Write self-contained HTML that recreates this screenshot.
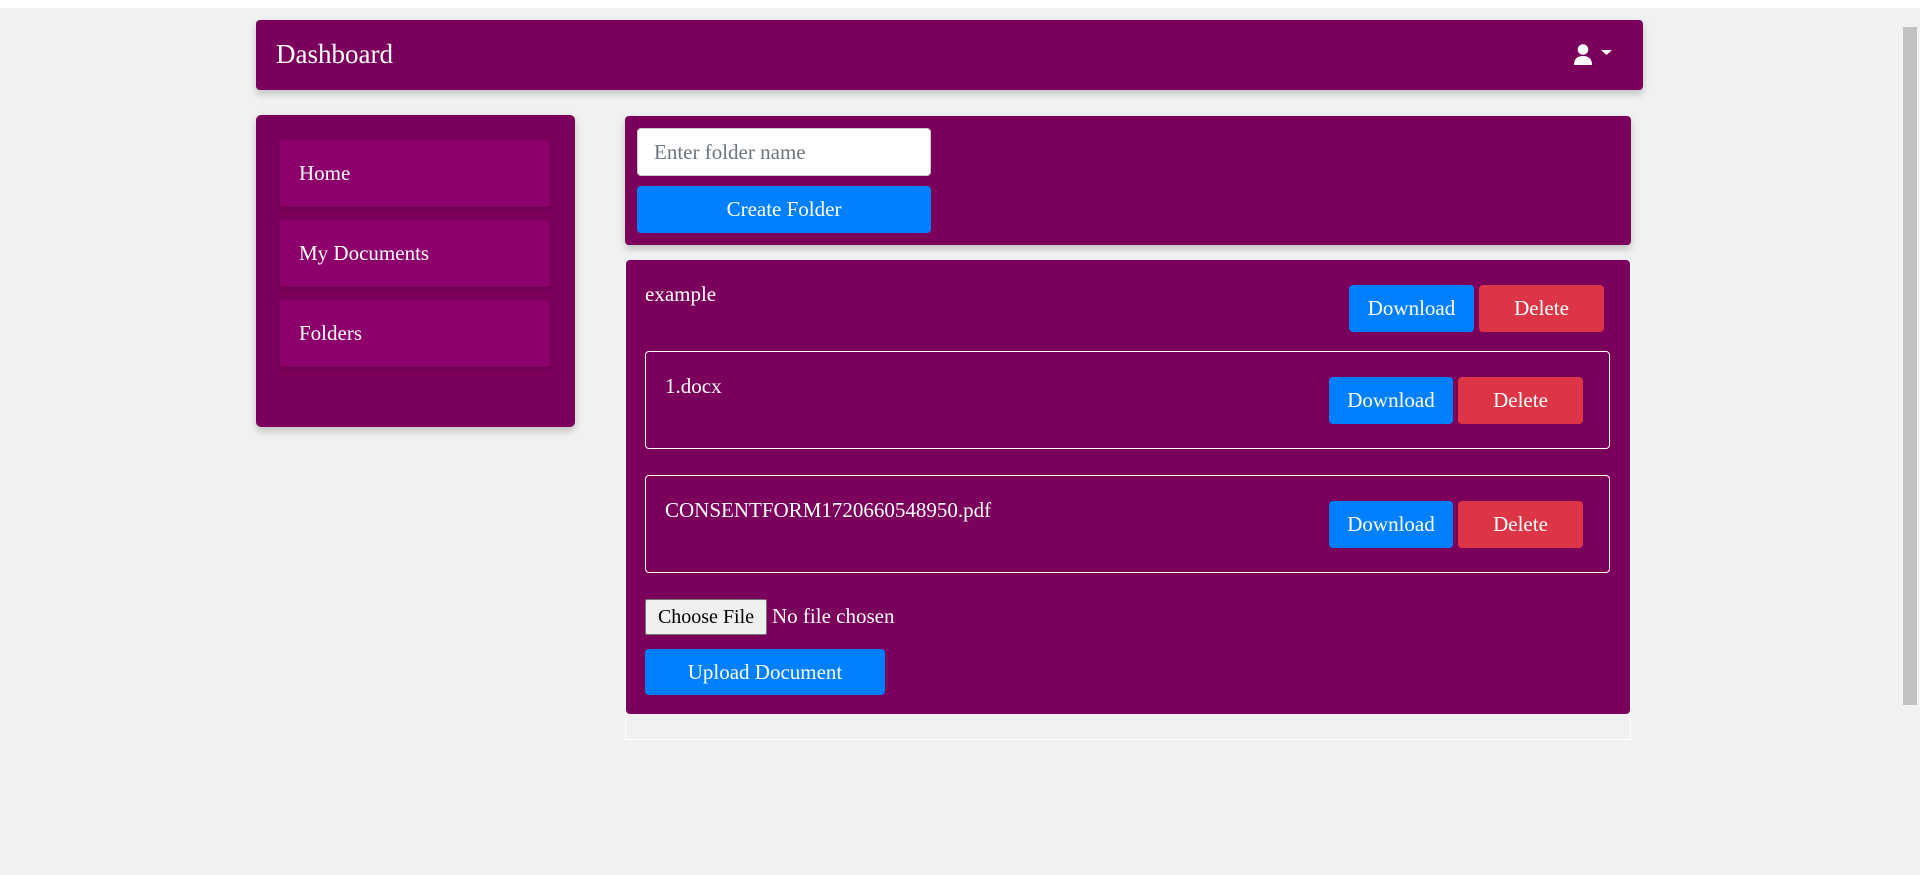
<!DOCTYPE html>
<html><head><meta charset="utf-8"><style>
*{box-sizing:border-box;margin:0;padding:0}
body{width:1920px;height:875px;background:#f1f1f1;font-family:"Liberation Serif",serif;color:#fff;position:relative;overflow:hidden}
.abs{position:absolute}
.topw{left:0;top:0;width:1920px;height:8px;background:#fff}
.nav{left:256px;top:20px;width:1387px;height:70px;background:#7b005c;border-radius:4px;box-shadow:0 4px 8px rgba(0,0,0,.2)}
.nav span{position:absolute;left:20px;top:19px;font-size:27px}
.side{left:256px;top:115px;width:319px;height:312px;background:#7b005c;border-radius:5px;box-shadow:0 4px 8px rgba(0,0,0,.2)}
.item{position:absolute;left:24px;width:270px;height:67px;background:#8d006b;border-radius:4px;box-shadow:0 2px 5px rgba(0,0,0,.2);font-size:21px;padding:21px 0 0 19px}
.card{background:#7b005c;border-radius:4px}
.btn{position:absolute;border-radius:4px;font-size:21px;text-align:center;color:#fff}
.blue{background:#0080ff}.red{background:#dc3545}
.box{position:absolute;left:645px;width:965px;height:98px;border:1px solid #fff;border-radius:4px}
.sb{left:1900px;top:8px;width:20px;height:867px;background:#f1f1f1}
.t{font-size:21px}
</style></head><body>
<div class="abs topw"></div>
<div class="abs nav"><span>Dashboard</span>
<svg style="position:absolute;left:1317px;top:24px" width="40" height="22" viewBox="0 0 40 22"><circle cx="10" cy="5.5" r="5.3" fill="#fff"/><path d="M1 21 Q1 12 10 12 Q19 12 19 21 Z" fill="#fff"/><path d="M28 6 L39 6 L33.5 11 Z" fill="#fff"/></svg>
</div>
<div class="abs side">
<div class="item" style="top:25px">Home</div>
<div class="item" style="top:105px">My Documents</div>
<div class="item" style="top:185px">Folders</div>
</div>
<div class="abs card" style="left:625px;top:116px;width:1006px;height:129px;box-shadow:0 4px 8px rgba(0,0,0,.2)"></div>
<div class="abs" style="left:637px;top:128px;width:294px;height:48px;background:#fff;border:1px solid #ccc;border-radius:4px;color:#6c757d;font-size:21px;padding:11px 0 0 16px">Enter folder name</div>
<div class="btn blue" style="left:637px;top:186px;width:294px;height:47px;line-height:47px">Create Folder</div>
<div class="abs" style="left:625px;top:260px;width:1006px;height:480px;border:1px solid #fff"></div>
<div class="abs card" style="left:626px;top:260px;width:1004px;height:454px"></div>
<div class="abs t" style="left:645px;top:282px">example</div>
<div class="btn blue" style="left:1349px;top:285px;width:125px;height:47px;line-height:47px">Download</div>
<div class="btn red" style="left:1479px;top:285px;width:125px;height:47px;line-height:47px">Delete</div>
<div class="box" style="top:351px"></div>
<div class="abs t" style="left:665px;top:374px">1.docx</div>
<div class="btn blue" style="left:1329px;top:377px;width:124px;height:47px;line-height:47px">Download</div>
<div class="btn red" style="left:1458px;top:377px;width:125px;height:47px;line-height:47px">Delete</div>
<div class="box" style="top:475px"></div>
<div class="abs t" style="left:665px;top:498px">CONSENTFORM1720660548950.pdf</div>
<div class="btn blue" style="left:1329px;top:501px;width:124px;height:47px;line-height:47px">Download</div>
<div class="btn red" style="left:1458px;top:501px;width:125px;height:47px;line-height:47px">Delete</div>
<div class="abs" style="left:645px;top:599px;width:122px;height:36px;background:#efefef;border:1px solid #767676;border-radius:2px;color:#000;font-size:20px;text-align:center;line-height:34px">Choose File</div>
<div class="abs t" style="left:772px;top:604px">No file chosen</div>
<div class="btn blue" style="left:645px;top:649px;width:240px;height:46px;line-height:46px">Upload Document</div>
<div class="abs sb"><div style="position:absolute;left:3px;top:19px;width:14px;height:678px;background:#c1c1c1"></div></div>
</body></html>
